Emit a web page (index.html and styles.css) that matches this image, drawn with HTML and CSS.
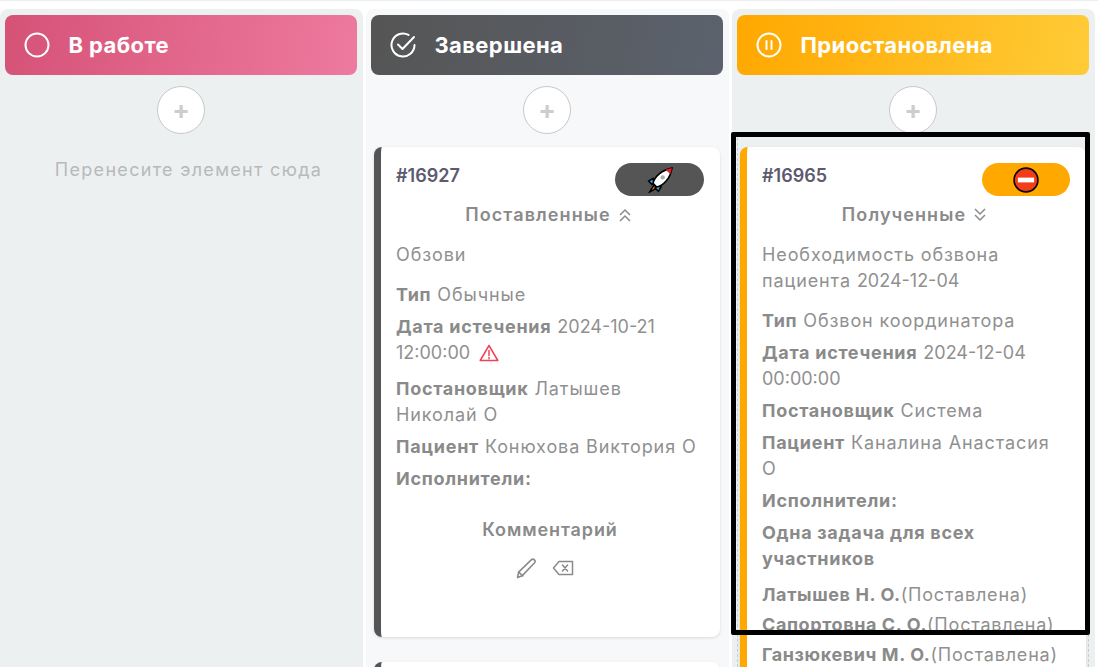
FILE: index.html
```html
<!doctype html>
<html>
	<head>
		<title>tasks</title>
		<meta charset="utf-8" />
		<link rel="stylesheet" href="styles.css">
	</head>
	<body>
		<div class="board">
			<div class="column column-grey">
				<div class="head head-pink">
					<svg class="head-icon" viewBox="0 0 26 26"><circle cx="13" cy="13" r="11.5"/></svg>
					<span>В работе</span>
				</div>
				<button class="add">+</button>
				<div class="empty">Перенесите элемент сюда</div>
			</div>

			<div class="column column-light">
				<div class="head head-dark">
					<svg class="head-icon" viewBox="0 0 26 26"><path d="M24.5 13a11.5 11.5 0 1 1-6-10.1"/><path d="M8 12.5l4.5 4.5L24 5"/></svg>
					<span>Завершена</span>
				</div>
				<button class="add">+</button>
				<div class="card card-dark">
					<div class="card-top">
						<span class="card-id">#16927</span>
						<span class="pill pill-dark">
							<svg class="emoji" viewBox="0 0 24 24">
								<path d="M6.5 16.5L2.5 23l6.5-3.5z" fill="#f47b20" stroke="#000" stroke-width="1.4"/>
								<path d="M5.500 10.500L1.500 13l3 3 2-1zM13 18.500L10.500 22.500l-3-3 1-2z" fill="#29aee6" stroke="#000" stroke-width="1.4"/>
								<path d="M5.500 15C7 9 13 3 23 1c-1.500 10-8 16-14 17.500z" fill="#fff" stroke="#000" stroke-width="1.500"/>
								<path d="M17 2.500C19 2 21.500 1.500 23 1c-.5 2-1 4-1.500 5.500z" fill="#e5202e"/>
								<circle cx="14.500" cy="9.500" r="2" fill="#a8b0b5"/>
							</svg>
						</span>
					</div>
					<div class="kind">
						Поставленные
						<svg class="chev" viewBox="0 0 14 14"><path d="M2 7l5-5 5 5M2 13l5-5 5 5"/></svg>
					</div>
					<p class="descr">Обзови</p>
					<p><b>Тип</b> Обычные</p>
					<p class="expired"><b>Дата истечения</b> <span class="num">2024-10-21</span> <span class="num">12:00:00</span>
						<svg class="warn" viewBox="0 0 20 18"><path d="M10 1.500L1.200 16.500h17.600z"/><path d="M10 6.500v5M10 13.500v1.200"/></svg>
					</p>
					<p><b>Постановщик</b> Латышев Николай О</p>
					<p><b>Пациент</b> Конюхова Виктория О</p>
					<p><b>Исполнители:</b></p>
					<div class="comment">Комментарий</div>
					<div class="actions">
						<svg class="act-pen" viewBox="0 0 20 20"><path d="M1.500 18.500l1-5L14.500 1.800c1-.8 2.200-.8 3 0s.9 2 0 3L6 16.800z"/><path d="M2.500 13.500l4 3.500"/></svg>
						<svg class="act-del" viewBox="0 0 22 16"><path d="M7 1.500h13.500v13H7L1.500 8z"/><path d="M10.500 5l5 6M15.500 5l-5 6"/></svg>
					</div>
				</div>
				<div class="card card-dark"></div>
			</div>

			<div class="column column-grey">
				<div class="head head-orange">
					<svg class="head-icon" viewBox="0 0 26 26"><circle cx="13" cy="13" r="11.500"/><path d="M10.500 9v8M15.500 9v8"/></svg>
					<span>Приостановлена</span>
				</div>
				<button class="add">+</button>
				<div class="dropzone">
					<div class="card card-orange">
						<div class="card-top">
							<span class="card-id">#16965</span>
							<span class="pill pill-orange">
								<svg class="emoji" viewBox="0 0 24 24">
									<circle cx="12" cy="12" r="11" fill="#f23c1a" stroke="#000" stroke-width="1.500"/>
									<rect x="4.500" y="9.800" width="15" height="4.400" fill="#fff"/>
								</svg>
							</span>
						</div>
						<div class="kind">
							Полученные
							<svg class="chev" viewBox="0 0 14 14"><path d="M2 1l5 5 5-5M2 7l5 5 5-5"/></svg>
						</div>
						<p class="descr">Необходимость обзвона пациента <span class="num">2024-12-04</span></p>
						<p><b>Тип</b> Обзвон координатора</p>
						<p><b>Дата истечения</b> <span class="num">2024-12-04</span> <span class="num">00:00:00</span></p>
						<p><b>Постановщик</b> Система</p>
						<p><b>Пациент</b> Каналина Анастасия О</p>
						<p><b>Исполнители:</b></p>
						<p class="task-note"><b>Одна задача для всех участников</b></p>
						<p class="person"><b>Латышев Н. О.</b>(Поставлена)</p>
						<p class="person"><b>Сапортовна С. О.</b>(Поставлена)</p>
						<p class="person"><b>Ганзюкевич М. О.</b>(Поставлена)</p>
					</div>
				</div>
			</div>
		</div>
		<div class="frame"></div>
	</body>
</html>
```

FILE: styles.css
```css
* { margin: 0; padding: 0; box-sizing: border-box; }
html, body { height: 100%; overflow: hidden; }
body { font-family: "Inter", "Noto Sans", sans-serif; font-size: 18px; letter-spacing: .9px; color: #909090; background: #fff; border-top: 1px solid #eee; }

.board { display: flex; gap: 3px; height: 666px; padding-top: 8px; width: 1095px; }
.column { width: 363px; padding: 6px 6px 0 5px; border-radius: 8px 8px 0 0; display: flex; flex-direction: column; align-items: stretch; overflow: hidden; }
.column-grey { background: #edf0f1; }
.column-light { background: #f7f8fa; }

.head { height: 60px; flex: none; border-radius: 8px; display: flex; align-items: center; gap: 18.500px; padding-left: 19px; color: #fff; font-size: 22px; letter-spacing: .4px; font-weight: 700; }
.head-pink { background: linear-gradient(100deg, #d65277, #ee7a9f); }
.head-dark { background: linear-gradient(100deg, #555555, #5b626d); }
.head-orange { background: linear-gradient(100deg, #ffa800, #ffcb37); }
.head-icon { width: 26px; height: 26px; fill: none; stroke: #fff; stroke-width: 2; stroke-linecap: round; stroke-linejoin: round; flex: none; }

.add { width: 48px; height: 48px; flex: none; margin: 11px auto 0; border-radius: 50%; border: 1px solid #c8c8c8; background: #fff; color: #cdcdcd; font-family: "Inter", sans-serif; font-size: 26px; font-weight: 700; line-height: 1; }
.empty { margin-top: 25px; padding-left: 15px; text-align: center; color: #b8b9ba; font-size: 18px; letter-spacing: 1.300px; }

.card { flex: none; background: #fff; border-radius: 8px; border-left: 7px solid #555; padding: 16px 16px 0 15px; margin: 13px 3px 0 3px; box-shadow: 0 1px 3px rgba(0,0,0,.12); line-height: 26px; }
.card + .card { margin-top: 25px; height: 100px; }
.card-orange { border-left-color: #ffa800; margin: 9px 2px 0 2px; padding-bottom: 40px; }

.dropzone { margin-top: 4px; border-left: 1px dashed #c9cccd; border-right: 1px dashed #c9cccd; flex: 1; }

.card-top { display: flex; justify-content: space-between; align-items: flex-start; height: 38px; }
.card-id { font-size: 18px; letter-spacing: 0; font-weight: 600; color: #5d5a6f; }
.pill { width: 89px; height: 33px; border-radius: 17px; display: flex; align-items: center; justify-content: center; }
.pill-dark { background: #555; }
.pill-orange { background: #ffa800; width: 88px; }
.emoji { width: 26px; height: 26px; }

.kind { display: flex; align-items: center; justify-content: center; gap: 7px; font-weight: 600; letter-spacing: 1.100px; height: 26px; margin-top: 1px; margin-bottom: 14px; padding-right: 3px; color: #8a8a8a; }
.chev { width: 14px; height: 14px; fill: none; stroke: #8a8a8a; stroke-width: 1.500; }

.card p { margin-bottom: 6px; }
.card p.descr { margin-bottom: 14px; }
.card p.expired { margin-bottom: 10px; }
.card p.task-note { margin-bottom: 10px; }
.card p.person { margin-bottom: 4px; letter-spacing: .8px; }
.card b { font-weight: 700; letter-spacing: .7px; color: #8a8a8a; }
.card p.person b { letter-spacing: .6px; }
.num { letter-spacing: 0; }
.warn { width: 20px; height: 18px; fill: none; stroke: #ee4455; stroke-width: 1.500; stroke-linejoin: round; stroke-linecap: round; vertical-align: -3px; margin-left: 3px; }

.comment { text-align: center; font-weight: 600; margin-top: 25px; color: #8a8a8a; }
.actions { display: flex; justify-content: center; gap: 15px; margin-top: 15px; margin-right: 10px; height: 79px; }
.actions svg { fill: none; stroke: #8a8a8a; stroke-width: 1.500; stroke-linejoin: round; stroke-linecap: round; }
.act-pen { width: 21px; height: 21px; }
.act-del { width: 22px; height: 16px; margin-top: 2px; }

/* annotation drawn over the screenshot */
.frame { position: absolute; left: 731px; top: 132px; width: 359px; height: 503px; border: 5px solid #000; border-radius: 2px; }
```
